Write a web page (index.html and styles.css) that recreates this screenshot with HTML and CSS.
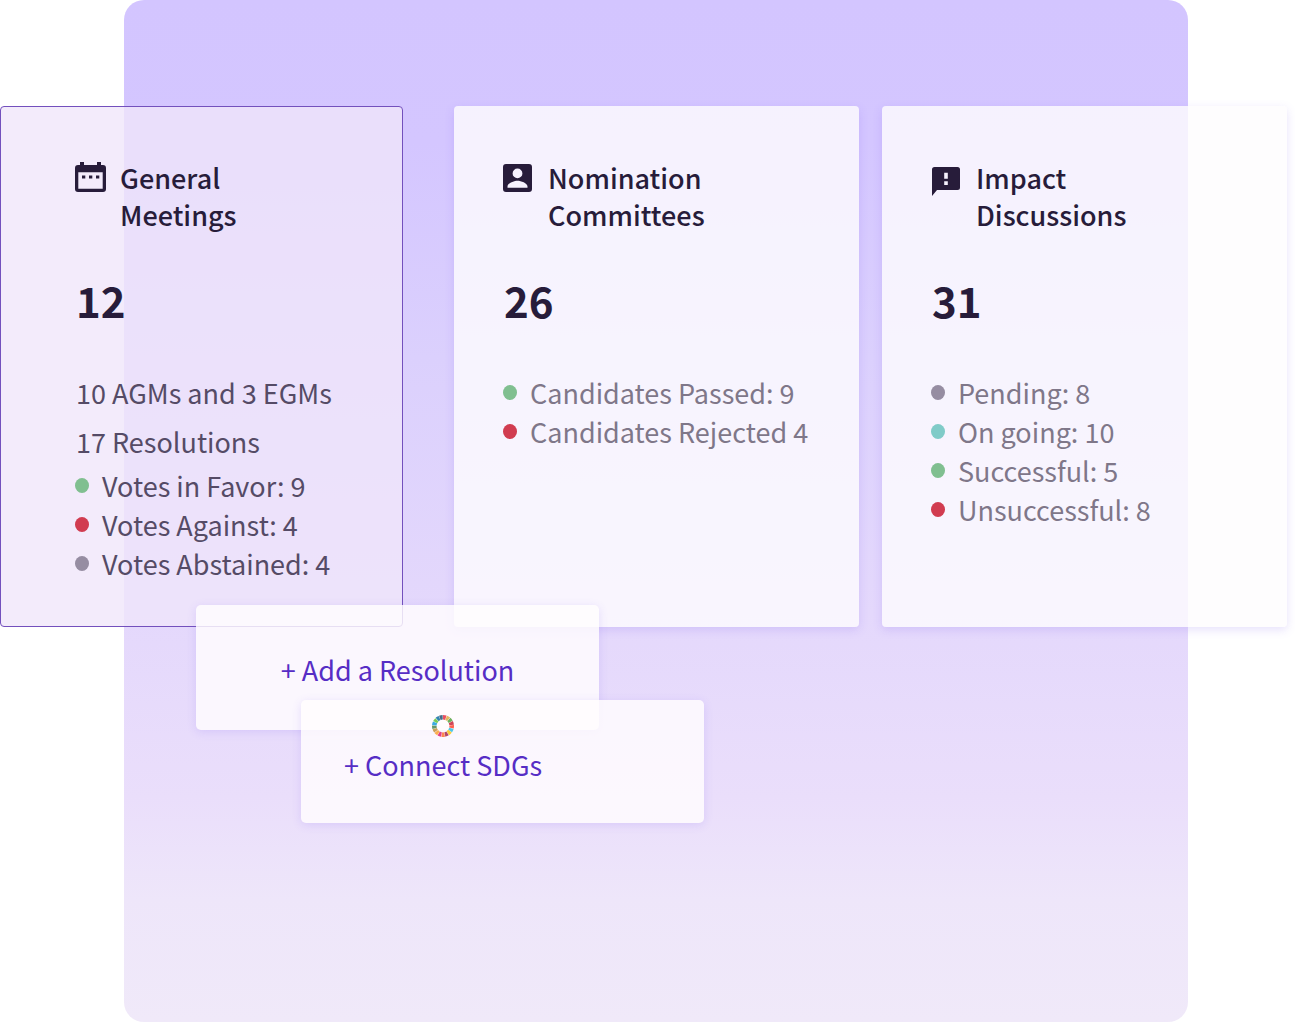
FILE: index.html
```html
<!DOCTYPE html>
<html lang="en">
<head>
<meta charset="utf-8">
<title>Engagement overview</title>
<link rel="stylesheet" href="styles.css">
</head>
<body>
<main class="stage">
  <div class="backdrop"></div>
  <div class="content">
    <div class="cards">
      <section class="card card-selected">
        <header class="card-head">
          <svg class="icon" viewBox="0 0 31 40" aria-hidden="true">
            <path fill-rule="evenodd" d="M5 5h4v3h13V5h4v3h2a3 3 0 0 1 3 3v21a3 3 0 0 1-3 3H3a3 3 0 0 1-3-3V11a3 3 0 0 1 3-3h2zM3.300 15.300v16.500h24.400v-16.500zM7 18.500h3.300v3H7zM14 18.500h3.300v3H14zM21 18.500h3.300v3H21z"/>
          </svg>
          <h2 class="card-title">General<br>Meetings</h2>
        </header>
        <p class="count">12</p>
        <p class="line">10 AGMs and 3 EGMs</p>
        <p class="line line-spaced">17 Resolutions</p>
        <ul class="list list-votes">
          <li class="item"><span class="dot dot-green"></span>Votes in Favor: 9</li>
          <li class="item"><span class="dot dot-red"></span>Votes Against: 4</li>
          <li class="item"><span class="dot dot-grey"></span>Votes Abstained: 4</li>
        </ul>
      </section>
      <section class="card">
        <header class="card-head">
          <svg class="icon" viewBox="0 0 31 40" aria-hidden="true">
            <path fill-rule="evenodd" d="M3 7h23a3 3 0 0 1 3 3v22a3 3 0 0 1-3 3H3a3 3 0 0 1-3-3V10a3 3 0 0 1 3-3zM14.500 11.500a4.900 4.900 0 1 0 0 9.800a4.900 4.900 0 1 0 0-9.800zM4.500 30.700h20v-1.200c0-3.300-6.600-5.700-10-5.700s-10 2.400-10 5.700z"/>
          </svg>
          <h2 class="card-title">Nomination<br>Committees</h2>
        </header>
        <p class="count">26</p>
        <ul class="list">
          <li class="item"><span class="dot dot-green"></span>Candidates Passed: 9</li>
          <li class="item"><span class="dot dot-red"></span>Candidates Rejected 4</li>
        </ul>
      </section>
      <section class="card">
        <header class="card-head">
          <svg class="icon" viewBox="0 0 31 40" aria-hidden="true">
            <path fill-rule="evenodd" d="M3.500 10h23a2.500 2.500 0 0 1 2.500 2.500v18a2.500 2.500 0 0 1-2.500 2.500H6l-5 6V12.500A2.500 2.500 0 0 1 3.500 10zM13.200 15.700v6h3.600v-6zM13.200 24.200v3.800h3.600v-3.800z"/>
          </svg>
          <h2 class="card-title">Impact<br>Discussions</h2>
        </header>
        <p class="count">31</p>
        <ul class="list">
          <li class="item"><span class="dot dot-grey"></span>Pending: 8</li>
          <li class="item"><span class="dot dot-teal"></span>On going: 10</li>
          <li class="item"><span class="dot dot-green"></span>Successful: 5</li>
          <li class="item"><span class="dot dot-red"></span>Unsuccessful: 8</li>
        </ul>
      </section>
    </div>
    <div class="actions">
      <button class="action" type="button">+ Add a Resolution</button>
      <button class="action action-sdg" type="button">
        <span class="sdg">
          <svg class="wheel" viewBox="-11 -11 22 22" aria-hidden="true">
            <g fill="none" stroke-width="4.600" transform="rotate(-90)">
              <circle r="8.700" pathLength="170" stroke-dasharray="9 161" stroke-dashoffset="0" stroke="#e5243b"/>
              <circle r="8.700" pathLength="170" stroke-dasharray="9 161" stroke-dashoffset="-10" stroke="#dda63a"/>
              <circle r="8.700" pathLength="170" stroke-dasharray="9 161" stroke-dashoffset="-20" stroke="#4c9f38"/>
              <circle r="8.700" pathLength="170" stroke-dasharray="9 161" stroke-dashoffset="-30" stroke="#c5192d"/>
              <circle r="8.700" pathLength="170" stroke-dasharray="9 161" stroke-dashoffset="-40" stroke="#ff3a21"/>
              <circle r="8.700" pathLength="170" stroke-dasharray="9 161" stroke-dashoffset="-50" stroke="#26bde2"/>
              <circle r="8.700" pathLength="170" stroke-dasharray="9 161" stroke-dashoffset="-60" stroke="#fcc30b"/>
              <circle r="8.700" pathLength="170" stroke-dasharray="9 161" stroke-dashoffset="-70" stroke="#a21942"/>
              <circle r="8.700" pathLength="170" stroke-dasharray="9 161" stroke-dashoffset="-80" stroke="#fd6925"/>
              <circle r="8.700" pathLength="170" stroke-dasharray="9 161" stroke-dashoffset="-90" stroke="#dd1367"/>
              <circle r="8.700" pathLength="170" stroke-dasharray="9 161" stroke-dashoffset="-100" stroke="#fd9d24"/>
              <circle r="8.700" pathLength="170" stroke-dasharray="9 161" stroke-dashoffset="-110" stroke="#bf8b2e"/>
              <circle r="8.700" pathLength="170" stroke-dasharray="9 161" stroke-dashoffset="-120" stroke="#3f7e44"/>
              <circle r="8.700" pathLength="170" stroke-dasharray="9 161" stroke-dashoffset="-130" stroke="#0a97d9"/>
              <circle r="8.700" pathLength="170" stroke-dasharray="9 161" stroke-dashoffset="-140" stroke="#56c02b"/>
              <circle r="8.700" pathLength="170" stroke-dasharray="9 161" stroke-dashoffset="-150" stroke="#00689d"/>
              <circle r="8.700" pathLength="170" stroke-dasharray="9 161" stroke-dashoffset="-160" stroke="#19486a"/>
            </g>
          </svg>
          <span>+ Connect SDGs</span>
        </span>
      </button>
    </div>
  </div>
</main>
</body>
</html>
```
FILE: styles.css
```css
* {
  box-sizing: border-box;
}

body {
  margin: 0;
  background: #fff;
  color: #271c3a;
  font-family: "Noto Sans CJK SC", "Noto Sans", sans-serif;
  font-size: 27px;
  line-height: 39px;
}

h2, p, ul {
  margin: 0;
  padding: 0;
}

/* Backdrop and content share one grid cell so the cards overhang the panel. */
.stage {
  display: grid;
  grid-template-columns: minmax(0, 1fr);
  min-height: 100vh;
}

.backdrop,
.content {
  grid-area: 1 / 1;
}

.backdrop {
  margin: 0 107px 0 124px;
  border-radius: 20px;
  background: linear-gradient(#d3c5ff 0%, #d4c6ff 14%, #dbd0fd 35%, #e4d8fc 60%, #eadefb 78%, #eee6fa 88%, #f0e9f9 100%);
}

.content {
  padding: 106px 8px 0 0;
}

.cards {
  display: grid;
  grid-template-columns: 431fr 405fr 405fr;
  gap: 23px;
}

.card {
  min-height: 521px;
  padding: 51px 24px 40px 49px;
  border-radius: 4px;
  background: rgba(254, 253, 254, 0.8);
  box-shadow: 0 3px 10px rgba(120, 90, 240, 0.18);
  color: #7f7789;
}

.card-selected {
  margin-right: 28px;
  padding: 50px 24px 40px 74px;
  border: 1px solid #7350bd;
  background: rgba(240, 230, 250, 0.79);
  box-shadow: none;
  color: #554b66;
}

.card-head {
  display: flex;
  gap: 14px;
  color: #271c3a;
}

.icon {
  width: 31px;
  height: 40px;
  fill: currentColor;
}

.card-title {
  padding-top: 2px;
  font-size: 27px;
  font-weight: 500;
  line-height: 37px;
}

.count {
  margin: 37px 0 43px;
  padding-left: 1px;
  color: #271c3a;
  font-size: 42px;
  font-weight: 700;
  line-height: 60px;
}

.line {
  padding-left: 1px;
}

.line-spaced {
  margin-top: 10px;
}

.list {
  list-style: none;
}

.list-votes {
  margin-top: 5px;
}

.item {
  display: flex;
  align-items: center;
  gap: 13px;
}

.dot {
  width: 14px;
  height: 15px;
  border-radius: 50%;
}

.dot-green { background: #80bf90; }
.dot-red { background: #d13c50; }
.dot-grey { background: #968da2; }
.dot-teal { background: #80cbc8; }

.actions {
  display: flex;
  flex-direction: column;
  margin: -22px 0 0 196px;
}

.action {
  width: 403px;
  min-height: 125px;
  padding: 3px 0 0;
  border: 0;
  border-radius: 5px;
  background: rgba(255, 253, 254, 0.83);
  box-shadow: 0 2px 10px rgba(120, 90, 240, 0.16);
  color: #562dc5;
  font: inherit;
  cursor: pointer;
}

.action-sdg {
  display: flex;
  align-items: flex-start;
  min-height: 123px;
  margin: -30px 0 0 105px;
  padding: 15px 0 0 43px;
}

.sdg {
  display: flex;
  flex-direction: column;
  align-items: center;
  gap: 8px;
}

.wheel {
  width: 22px;
  height: 22px;
  opacity: 0.8;
}
```
